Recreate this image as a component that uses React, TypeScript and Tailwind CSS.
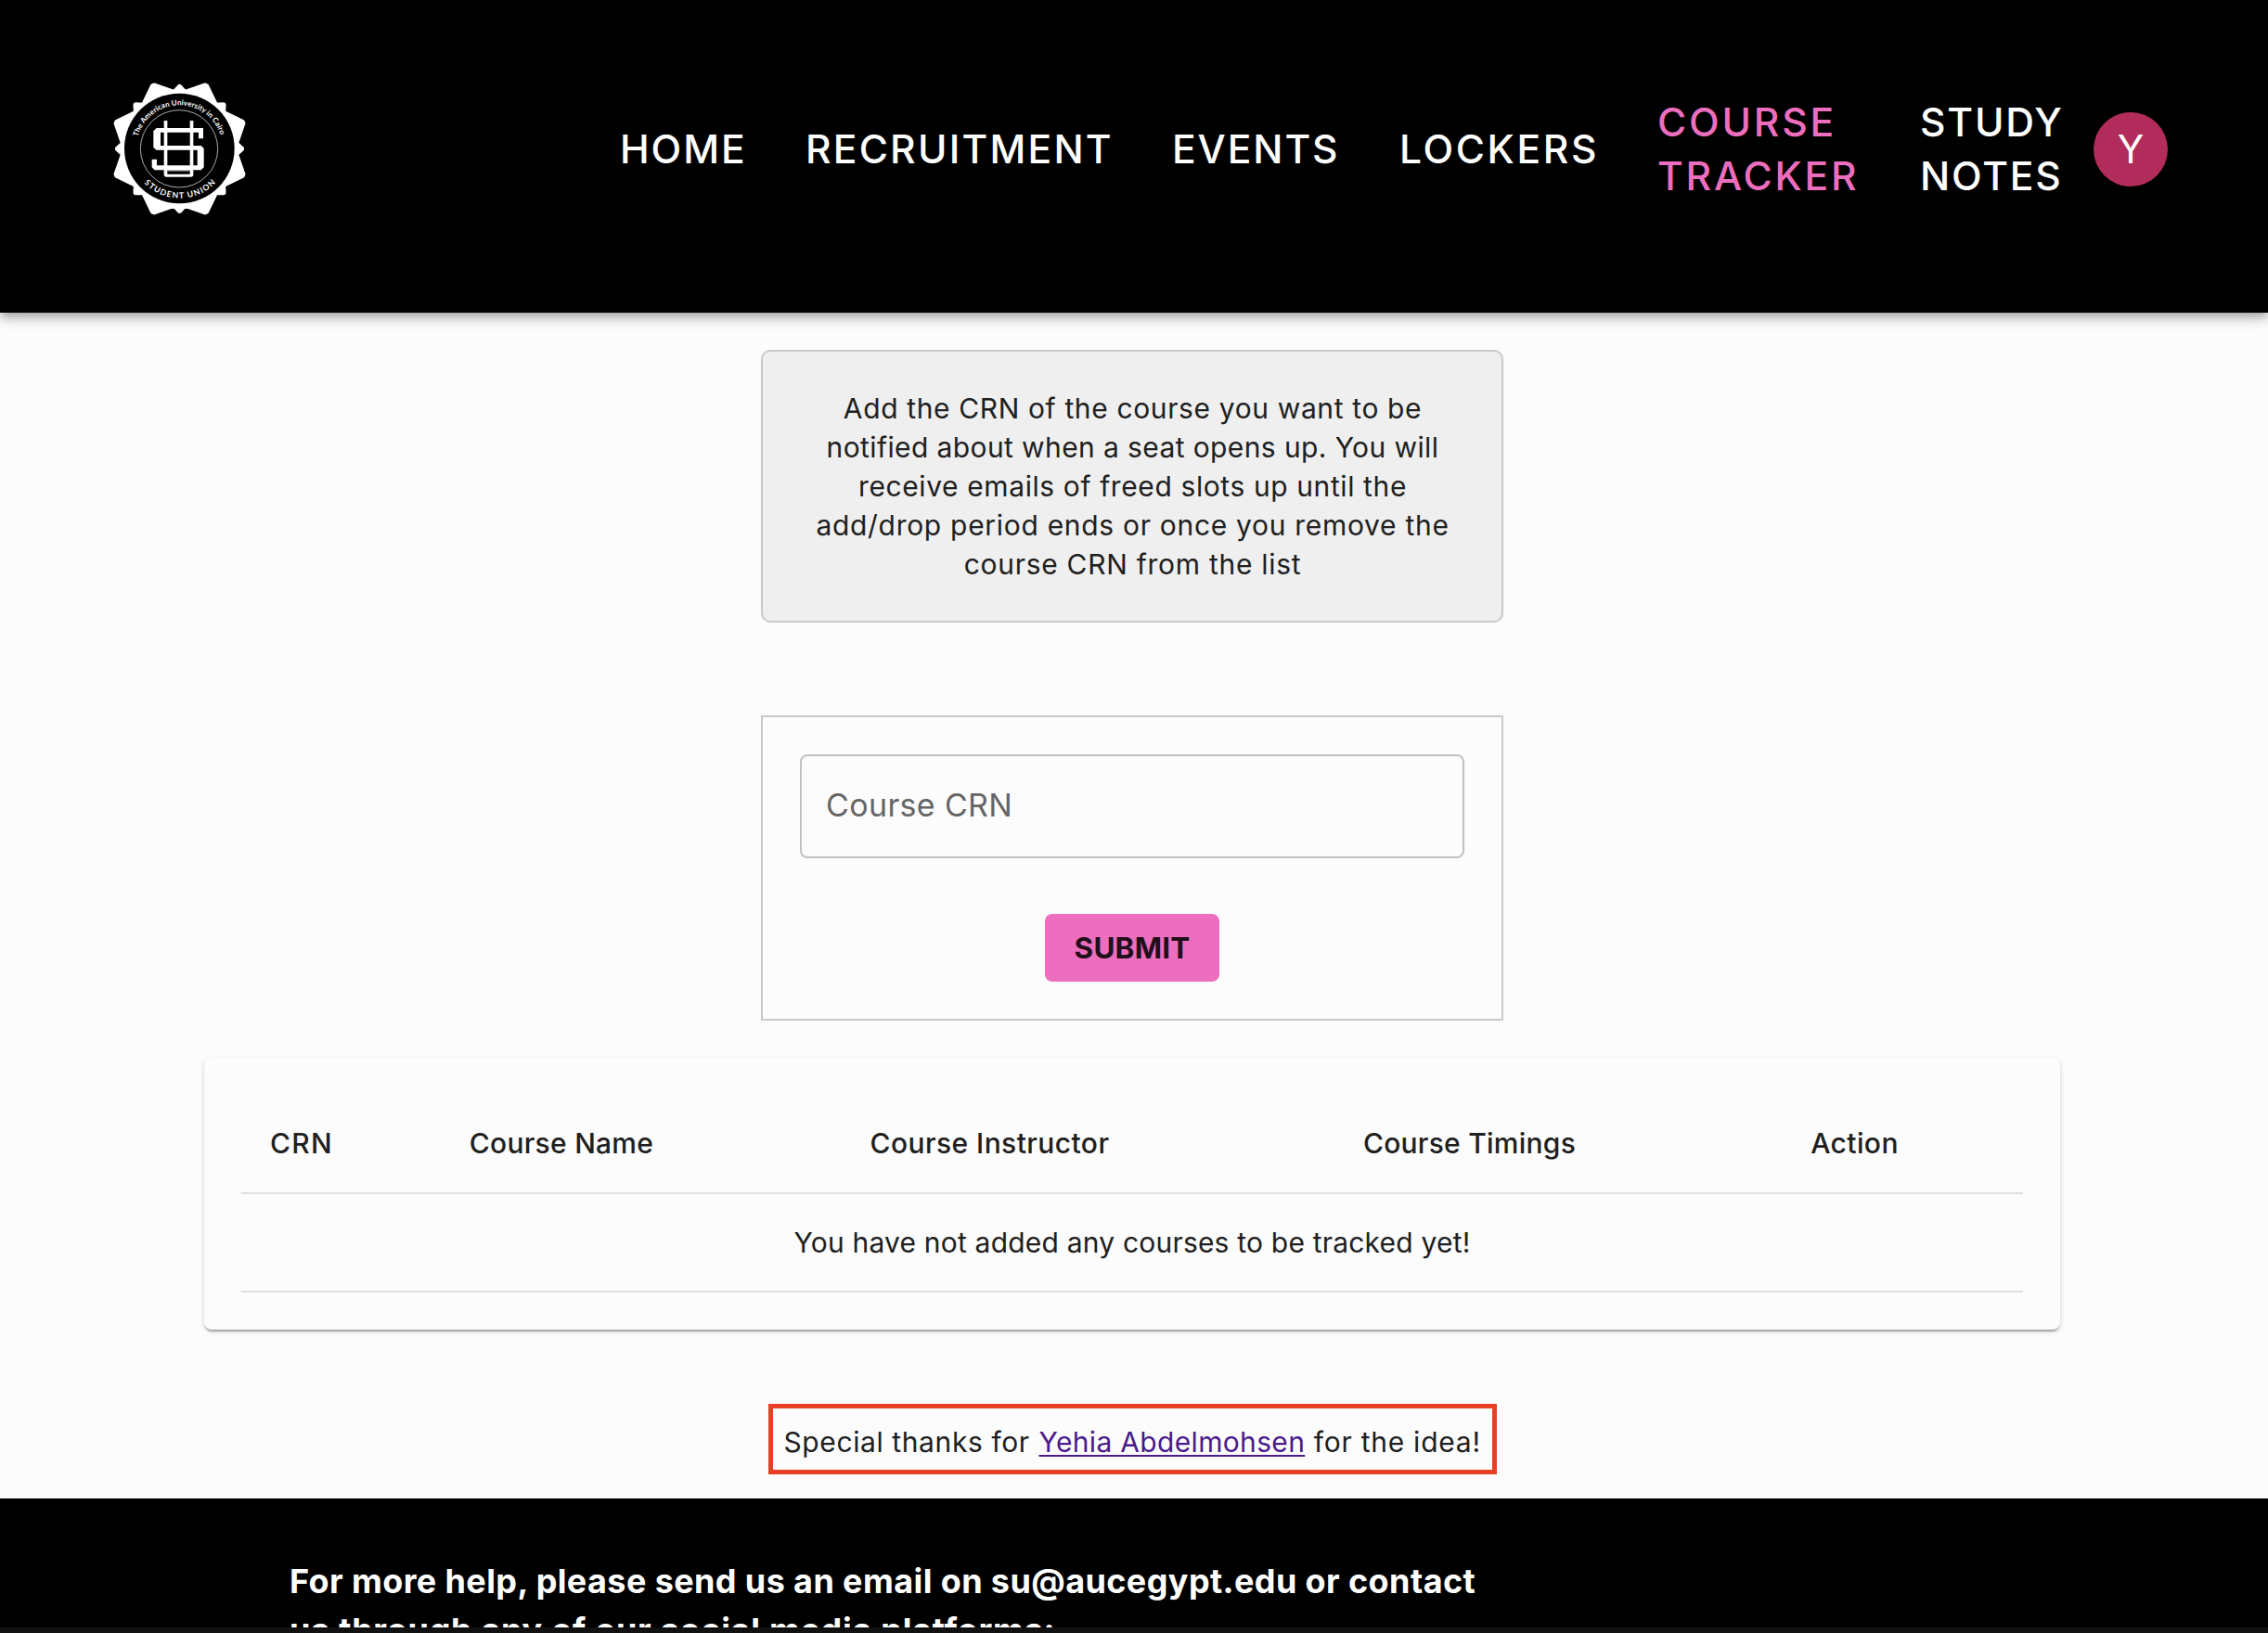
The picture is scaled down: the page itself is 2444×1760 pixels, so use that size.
import React from "react";

const NAV = [
  { lines: ["HOME"], box: "w-[200px]", track: "tracking-[1.9px]" },
  { lines: ["RECRUITMENT"], box: "w-[395px]", track: "tracking-[2.2px]" },
  { lines: ["EVENTS"], box: "w-[245px]", track: "tracking-[1.9px]" },
  { lines: ["LOCKERS"], box: "w-[278px]", track: "tracking-[2.6px]" },
  { lines: ["COURSE", "TRACKER"], box: "w-[283px]", track: "tracking-[2.8px]", active: true },
  { lines: ["STUDY", "NOTES"], box: "w-[187px]", track: "tracking-[1.8px]" },
];

const INFO = [
  { text: "Add the CRN of the course you want to be", track: "tracking-[0.63px]" },
  { text: "notified about when a seat opens up. You will", track: "tracking-[0.39px]" },
  { text: "receive emails of freed slots up until the", track: "tracking-[0.6px]" },
  { text: "add/drop period ends or once you remove the", track: "tracking-[0.7px]" },
  { text: "course CRN from the list", track: "tracking-[0.72px]" },
];

const COLUMNS = [
  { label: "CRN", track: "tracking-[1.3px]" },
  { label: "Course Name", track: "tracking-[0.25px]" },
  { label: "Course Instructor", track: "tracking-[0.42px]" },
  { label: "Course Timings", track: "tracking-[0.25px]" },
  { label: "Action", track: "tracking-[0.4px]" },
];

function sealPoints() {
  const pts: string[] = [];
  const add = (r: number, deg: number) => {
    const a = (deg * Math.PI) / 180;
    pts.push(`${(280.5 + r * Math.sin(a)).toFixed(1)},${(271 - r * Math.cos(a)).toFixed(1)}`);
  };
  for (let k = 0; k < 8; k++) {
    const base = k * 45;
    add(186, base - 5.5);
    add(203, base - 0.4);
    add(203, base + 0.4);
    add(186, base + 5.5);
    add(223, base + 21.6);
    add(223, base + 23.4);
  }
  return pts.join(" ");
}

function Seal() {
  return (
    <svg viewBox="60 51 440 440" className="h-[146.7px] w-[146.7px] shrink-0">
      <defs>
        <path id="arc-top" d="M 146 232 A 139 139 0 0 1 414 232" />
        <path id="arc-bottom" d="M 166 382 A 161 161 0 0 0 397 382" />
      </defs>
      <polygon points={sealPoints()} fill="#fff" stroke="#fff" strokeWidth="11" strokeLinejoin="round" />
      <circle cx="280" cy="270" r="178" fill="#000" />
      <circle cx="279" cy="271" r="125" fill="none" stroke="#fff" strokeWidth="2" />
      <text fill="#fff" fontFamily="Lato" fontWeight="700" fontSize="24">
        <textPath href="#arc-top" textLength="356">The American University in Cairo</textPath>
      </text>
      <text fill="#fff" fontFamily="Lato" fontWeight="700" fontSize="26">
        <textPath href="#arc-bottom" textLength="258">STUDENT UNION</textPath>
      </text>
      <g fill="#fff">
        <path d="M206 204H357V238H342V218H219V261H350L359 270V331L350 340H200L191 331V305H207V325H338V275H205L196 266V214Z" />
        <path d="M230 180H241V353H314V180H325V354Q325 362 317 362H238Q230 362 230 354Z" />
        <path d="M241 340H314V343H241Z" />
      </g>
    </svg>
  );
}

export default function App() {
  return (
    <div className="flex h-[1760px] w-[2444px] flex-col overflow-hidden bg-[#fcfcfc] font-['Inter',sans-serif] text-[30px] leading-[42px] text-[#202020]">
      <header className="relative z-10 flex h-[337px] shrink-0 items-start bg-black pt-[87px] pr-[108px] pl-[120px] shadow-[0_4px_8px_-2px_rgba(0,0,0,0.2),0_8px_10px_rgba(0,0,0,0.14),0_2px_20px_rgba(0,0,0,0.12)]">
        <div className="flex h-[147px] w-full items-center">
          <Seal />
          <nav className="ml-auto flex items-center text-[42.6px] leading-[58px] font-medium text-white">
            {NAV.map((item) => (
              <a key={item.lines[0]} className={`${item.box} ${item.track} ${item.active ? "text-[#ed6ebf]" : ""}`}>
                {item.lines.map((line) => (
                  <span key={line} className="block">{line}</span>
                ))}
              </a>
            ))}
          </nav>
          <div className="flex size-20 shrink-0 items-center justify-center rounded-full bg-[#b22c5b] text-[42px] text-white">Y</div>
        </div>
      </header>

      <main className="flex h-[1278px] shrink-0 flex-col items-center pt-10 pr-1">
        <section className="h-[294px] w-[800px] rounded-[10px] border-2 border-[#c9c9c9] bg-[#efefef] pt-10 pl-px text-center">
          {INFO.map((line) => (
            <p key={line.text} className={`whitespace-nowrap ${line.track}`}>{line.text}</p>
          ))}
        </section>

        <form className="mt-[100px] flex h-[329px] w-[800px] flex-col items-center border-2 border-[#c9c9c9] px-10 pt-10">
          <div className="flex h-28 w-full items-center rounded-lg border-2 border-[#c1c1c1] pb-0.5 pl-[26px] text-[34px] tracking-[0.35px] text-[#666]">Course CRN</div>
          <button type="button" className="mt-[60px] h-[73px] w-[188px] rounded-lg bg-[#ed6ebf] text-[31.5px] font-bold tracking-[0.18px] text-[#210f1b]">SUBMIT</button>
        </form>

        <section className="mt-10 h-[293px] w-[2000px] rounded-lg bg-[#fcfcfc] p-10 shadow-[0_4px_2px_-2px_rgba(0,0,0,0.2),0_2px_2px_rgba(0,0,0,0.14),0_2px_6px_rgba(0,0,0,0.12)]">
          <div className="grid h-[107px] grid-cols-[130px_430px_493px_541px_326px] items-center border-b-2 border-[#e0e0e0] pb-0.5 text-center font-medium">
            {COLUMNS.map((c) => (
              <div key={c.label} className={`${c.track} ${c.label === "Action" ? "pr-[37px]" : ""}`}>{c.label}</div>
            ))}
          </div>
          <div className="flex h-[106px] items-center justify-center border-b-2 border-[#e0e0e0] tracking-[0.2px]">You have not added any courses to be tracked yet!</div>
        </section>

        <p className="mt-20 flex h-[76px] w-[785px] items-center border-[5px] border-[#e94025] pt-1.5 pl-3 whitespace-pre">
          <span className="w-[275px] tracking-[0.6px]">Special thanks for </span>
          <a className="w-[287px] tracking-[0.33px] text-[#4b1a8c] underline decoration-2 underline-offset-[3px]">Yehia Abdelmohsen</a>
          <span className="tracking-[0.75px]"> for the idea!</span>
        </p>
      </main>

      <footer className="min-h-0 flex-1 overflow-hidden bg-black pt-[63px] pl-[312px] text-[36px] leading-[53px] font-bold whitespace-nowrap text-white">
        <p className="tracking-[0.39px]">For more help, please send us an email on su@aucegypt.edu or contact</p>
        <p className="tracking-[0.7px]">us through any of our social media platforms:</p>
      </footer>
      <div className="h-1.5 shrink-0 bg-[#111]" />
    </div>
  );
}
